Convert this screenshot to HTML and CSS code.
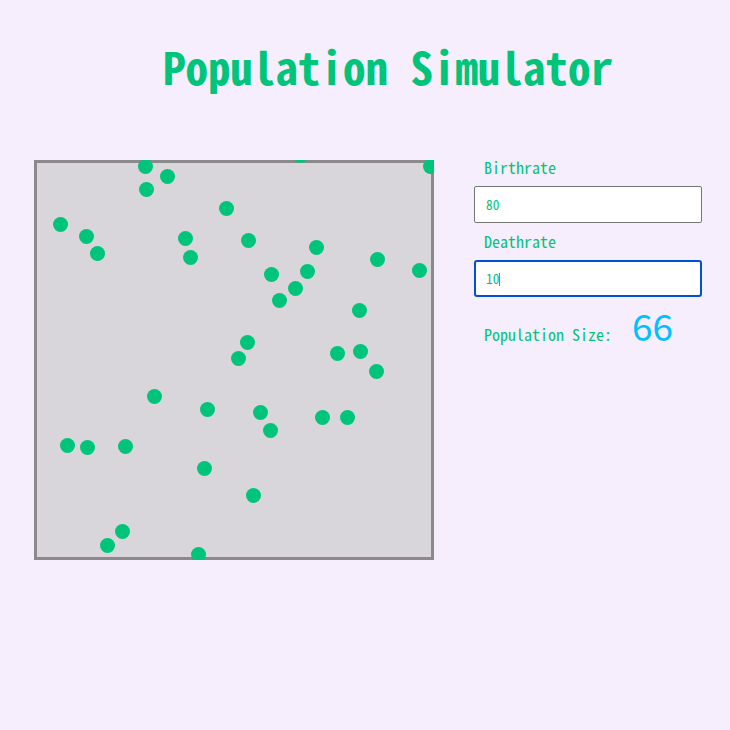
FILE: index.html
```html
<!DOCTYPE html>
<html lang="en">
<head>
<meta charset="utf-8">
<title>Population Simulator</title>
<link rel="stylesheet" href="styles.css">
</head>
<body>
<h1 class="title">Population Simulator</h1>
<main class="layout">
  <div class="field">
    <div class="dot" style="left:103.5px;top:-1.5px"></div>
    <div class="dot" style="left:126.2px;top:8.5px"></div>
    <div class="dot" style="left:104.5px;top:21.5px"></div>
    <div class="dot" style="left:259.2px;top:-12px"></div>
    <div class="dot" style="left:389.2px;top:-1.5px"></div>
    <div class="dot" style="left:185.2px;top:40.5px"></div>
    <div class="dot" style="left:18.5px;top:57.2px"></div>
    <div class="dot" style="left:45.2px;top:68.5px"></div>
    <div class="dot" style="left:55.8px;top:86.2px"></div>
    <div class="dot" style="left:144.2px;top:71.2px"></div>
    <div class="dot" style="left:148.5px;top:89.5px"></div>
    <div class="dot" style="left:206.5px;top:73.2px"></div>
    <div class="dot" style="left:274.5px;top:79.8px"></div>
    <div class="dot" style="left:336.2px;top:91.8px"></div>
    <div class="dot" style="left:377.5px;top:103.2px"></div>
    <div class="dot" style="left:229.5px;top:106.5px"></div>
    <div class="dot" style="left:265.8px;top:103.8px"></div>
    <div class="dot" style="left:253.5px;top:121.2px"></div>
    <div class="dot" style="left:237.5px;top:133.2px"></div>
    <div class="dot" style="left:317.8px;top:143.2px"></div>
    <div class="dot" style="left:205.5px;top:175.2px"></div>
    <div class="dot" style="left:196.5px;top:191px"></div>
    <div class="dot" style="left:295.5px;top:185.8px"></div>
    <div class="dot" style="left:318.8px;top:184.2px"></div>
    <div class="dot" style="left:335.2px;top:204.2px"></div>
    <div class="dot" style="left:112.8px;top:228.5px"></div>
    <div class="dot" style="left:166.2px;top:242.2px"></div>
    <div class="dot" style="left:26.2px;top:278.2px"></div>
    <div class="dot" style="left:46.2px;top:280.2px"></div>
    <div class="dot" style="left:84.2px;top:279.2px"></div>
    <div class="dot" style="left:162.5px;top:300.5px"></div>
    <div class="dot" style="left:81.2px;top:364.2px"></div>
    <div class="dot" style="left:66.2px;top:378.2px"></div>
    <div class="dot" style="left:156.8px;top:386.8px"></div>
    <div class="dot" style="left:218.5px;top:245.2px"></div>
    <div class="dot" style="left:228.5px;top:263.2px"></div>
    <div class="dot" style="left:281.2px;top:249.8px"></div>
    <div class="dot" style="left:305.5px;top:250.2px"></div>
    <div class="dot" style="left:212.2px;top:328.2px"></div>
  </div>
  <form class="controls">
    <label class="label" for="birth">Birthrate</label>
    <input class="input" id="birth" type="text" value="80">
    <label class="label" for="death">Deathrate</label>
    <div class="input-wrap">
      <input class="input input-focused" id="death" type="text" value="10">
      <span class="caret"></span>
    </div>
    <div class="stat">
      <span class="stat-label">Population Size:</span>
      <span class="stat-value">66</span>
    </div>
  </form>
</main>
</body>
</html>
```

FILE: styles.css
```css
html, body {
  margin: 0;
  padding: 0;
  background: #f6eefd;
}
body {
  width: 730px;
  height: 730px;
  overflow: hidden;
  font-family: "Noto Sans Mono CJK SC", "DejaVu Sans Mono", monospace;
  color: #00c47a;
}
.title {
  margin: 0;
  padding: 39px 0 0 46px;
  text-align: center;
  font-size: 45px;
  line-height: 54px;
  font-weight: 700;
  color: #00c47a;
}
.layout {
  display: flex;
  align-items: flex-start;
  gap: 40px;
  padding: 67px 0 0 34px;
}
.field {
  position: relative;
  width: 400px;
  height: 400px;
  flex: none;
  overflow: hidden;
}
.field::before {
  content: "";
  position: absolute;
  inset: 0;
  border: 3px solid #8a898c;
  background: #d8d6db;
}
.dot {
  position: absolute;
  width: 15px;
  height: 15px;
  border-radius: 50%;
  background: #00c47a;
}
.controls {
  display: flex;
  flex-direction: column;
  width: 228px;
  margin: -3px 0 0 0;
}
.label {
  font-size: 16px;
  line-height: 20px;
  margin: 0 0 9px 10px;
}
.input {
  box-sizing: border-box;
  width: 228px;
  height: 37px;
  margin: 0 0 8px 0;
  padding: 0 11px;
  border: 1px solid #767676;
  border-radius: 2px;
  background: #ffffff;
  font-family: inherit;
  font-size: 13.33px;
  color: #00c47a;
  outline: none;
}
.input-wrap {
  position: relative;
}
.input-focused {
  border: 2px solid #0050d4;
  border-radius: 3px;
  padding-left: 10px;
}
.caret {
  position: absolute;
  left: 25px;
  top: 13px;
  width: 1px;
  height: 13px;
  background: #00c47a;
}
.stat {
  display: flex;
  align-items: baseline;
  gap: 20px;
  margin: 2px 0 0 10px;
}
.stat-label {
  font-size: 16px;
}
.stat-value {
  font-family: "Noto Sans CJK SC", "Noto Sans", sans-serif;
  font-size: 37px;
  line-height: 37px;
  color: #00c0ff;
}
```
